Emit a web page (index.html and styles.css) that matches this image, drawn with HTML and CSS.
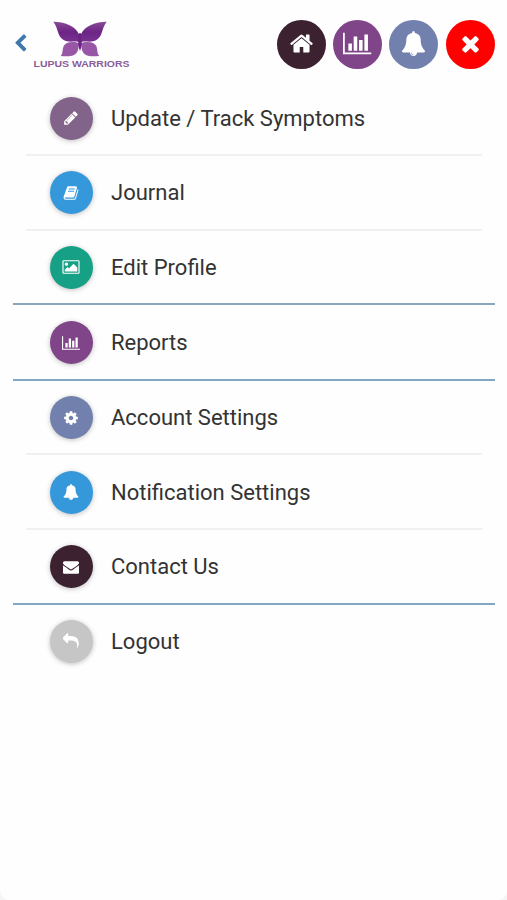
FILE: index.html
```html
<!DOCTYPE html>
<html lang="en">
<head>
    <meta charset="UTF-8">
    <meta name="viewport" content="width=device-width, initial-scale=1.0">
    <title>Lupus Warriors</title>
    <link rel="stylesheet" href="styles.css">
</head>
<body>
    <!-- Shared icons -->
    <svg class="icon-defs" width="0" height="0">
        <symbol id="icon-chart" viewBox="0 0 2048 1792"><path d="M640 896v512h-256v-512h256zm384-512v1024h-256v-1024h256zm1024 1152v128h-2048v-1536h128v1408h1920zm-640-896v768h-256v-768h256zm384-384v1152h-256v-1152h256z"/></symbol>
        <symbol id="icon-bell" viewBox="0 0 1792 1792"><path d="M912 1696q0-16-16-16-59 0-101.5-42.5t-42.5-101.5q0-16-16-16t-16 16q0 73 51.5 124.5t124.5 51.5q16 0 16-16zm816-288q0 52-38 90t-90 38h-448q0 106-75 181t-181 75-181-75-75-181h-448q-52 0-90-38t-38-90q50-42 91-88t85-119.5 74.5-158.5 50-206 19.5-260q0-152 117-282.5t307-158.5q-8-19-8-39 0-40 28-68t68-28 68 28 28 68q0 20-8 39 190 28 307 158.5t117 282.5q0 139 19.5 260t50 206 74.5 158.5 85 119.5 91 88z"/></symbol>
    </svg>

    <div class="page">
        <header class="header">
            <a class="back" href="#" aria-label="Back">
                <svg viewBox="0 0 1792 1792"><path d="M1427 301l-531 531 531 531q19 19 19 45t-19 45l-166 166q-19 19-45 19t-45-19l-742-742q-19-19-19-45t19-45l742-742q19-19 45-19t45 19l166 166q19 19 19 45t-19 45z"/></svg>
            </a>
            <svg class="logo" viewBox="0 0 100 52">
                <defs>
                    <linearGradient id="wing" x1="0" y1="0" x2="0" y2="1">
                        <stop offset="0" stop-color="#8a4a96"/>
                        <stop offset="0.5" stop-color="#6d2585"/>
                        <stop offset="1" stop-color="#7b3392"/>
                    </linearGradient>
                    <g id="half">
                        <path fill="url(#wing)" d="M20.3 2.7C31 3 43 6.500 46.200 16L46.500 23.200C41 21.600 35 24 30.500 21C24 17 25.500 9 20.300 2.700z"/>
                        <path fill="#9857a6" d="M46.200 24.200C41 22.300 33.500 22.500 31 26.500C29 30 30.500 33.500 27.800 37C33 37.500 40 38 43.500 34C45.500 31.500 45.500 28 46.200 24.200z"/>
                    </g>
                </defs>
                <use href="#half"/>
                <use href="#half" transform="translate(94 0) scale(-1 1)"/>
                <path fill="#6d2585" d="M47 14c2 0 2.200 3 1.700 5.500.4 4-.3 9-1.700 12.500-1.400-3.500-2.100-8.500-1.700-12.500-.5-2.500-.3-5.500 1.700-5.500z"/>
                <text class="logo-text" x="0.500" y="48" textLength="96" lengthAdjust="spacingAndGlyphs">LUPUS WARRIORS</text>
            </svg>
            <nav class="shortcuts">
                <a class="circle dark" href="#" aria-label="Home">
                    <svg viewBox="0 0 1792 1792"><path d="M1472 992v480q0 26-19 45t-45 19h-384v-384h-256v384h-384q-26 0-45-19t-19-45v-480q0-1 .5-3t.5-3l575-474 575 474q1 2 1 6zm223-69l-62 74q-8 9-21 11h-3q-13 0-21-7l-692-577-692 577q-12 8-24 7-13-2-21-11l-62-74q-8-10-7-23.5t11-21.5l719-599q32-26 76-26t76 26l244 204v-195q0-14 9-23t23-9h192q14 0 23 9t9 23v408l219 182q10 8 11 21.5t-7 23.5z"/></svg>
                </a>
                <a class="circle purple" href="#" aria-label="Reports">
                    <svg class="wide"><use href="#icon-chart"/></svg>
                </a>
                <a class="circle slate" href="#" aria-label="Notifications">
                    <svg><use href="#icon-bell"/></svg>
                </a>
                <a class="circle red" href="#" aria-label="Close">
                    <svg viewBox="0 0 1792 1792"><path d="M1490 1322q0 40-28 68l-136 136q-28 28-68 28t-68-28l-294-294-294 294q-28 28-68 28t-68-28l-136-136q-28-28-28-68t28-68l294-294-294-294q-28-28-28-68t28-68l136-136q28-28 68-28t68 28l294 294 294-294q28-28 68-28t68 28l136 136q28 28 28 68t-28 68l-294 294 294 294q28 28 28 68z"/></svg>
                </a>
            </nav>
        </header>

        <div class="menu">
            <div class="group">
                <a class="item" href="#">
                    <span class="circle mauve"><svg viewBox="0 0 1792 1792"><path d="M491 1536l91-91-235-235-91 91v107h128v128h107zm523-928q0-22-22-22-10 0-17 7l-542 542q-7 7-7 17 0 22 22 22 10 0 17-7l542-542q7-7 7-17zm-54-192l416 416-832 832h-416v-416zm683 96q0 53-37 90l-166 166-416-416 166-165q36-38 90-38 53 0 91 38l235 234q37 39 37 91z"/></svg></span>
                    <span>Update / Track Symptoms</span>
                </a>
                <a class="item" href="#">
                    <span class="circle blue"><svg viewBox="0 0 1792 1792"><path d="M1703 478q40 57 18 129l-275 906q-19 64-76.5 107.5t-122.5 43.5h-923q-77 0-148.5-53.5t-99.5-131.5q-24-67-2-127 0-4 3-27t4-37q1-8-3-21.5t-3-19.5q2-11 8-21t16.5-23.5 16.5-23.5q23-38 45-91.5t30-91.5q3-10 .5-30t-.5-28q3-11 17-28t17-23q21-36 42-92t25-90q1-9-2.5-32t.5-28q4-13 22-30.5t22-22.5q19-26 42.5-84.5t27.5-96.5q1-8-3-25.5t-2-26.5q2-8 9-18t18-23 17-21q8-12 16.5-30.5t15-35 16-36 19.5-32 26.5-23.5 36-11.5 47.5 5.5l-1 3q38-9 51-9h761q74 0 114 56t18 130l-274 906q-36 119-71.5 153.5t-128.5 34.5h-869q-27 0-38 15-11 16-1 43 24 70 144 70h923q29 0 56-15.5t35-41.5l300-987q7-22 5-57 38 15 59 43zm-1064 2q-4 13 2 22.5t20 9.5h608q13 0 25.5-9.5t16.5-22.5l21-64q4-13-2-22.5t-20-9.5h-608q-13 0-25.5 9.5t-16.5 22.5zm-83 256q-4 13 2 22.5t20 9.5h608q13 0 25.5-9.5t16.5-22.5l21-64q4-13-2-22.5t-20-9.5h-608q-13 0-25.5 9.5t-16.5 22.5z"/></svg></span>
                    <span>Journal</span>
                </a>
                <a class="item" href="#">
                    <span class="circle green"><svg class="wide" viewBox="-64 0 1920 1792"><path d="M576 576q0 80-56 136t-136 56-136-56-56-136 56-136 136-56 136 56 56 136zm1024 384v448h-1408v-192l320-320 160 160 512-512zm96-704h-1600q-13 0-22.5 9.5t-9.5 22.5v1216q0 13 9.5 22.5t22.5 9.5h1600q13 0 22.5-9.5t9.5-22.5v-1216q0-13-9.5-22.5t-22.5-9.5zm160 32v1216q0 66-47 113t-113 47h-1600q-66 0-113-47t-47-113v-1216q0-66 47-113t113-47h1600q66 0 113 47t47 113z"/></svg></span>
                    <span>Edit Profile</span>
                </a>
            </div>
            <div class="group single">
                <a class="item" href="#">
                    <span class="circle purple"><svg class="wide"><use href="#icon-chart"/></svg></span>
                    <span>Reports</span>
                </a>
            </div>
            <div class="group">
                <a class="item" href="#">
                    <span class="circle slate"><svg viewBox="0 0 1792 1792"><path d="M1152 896q0-106-75-181t-181-75-181 75-75 181 75 181 181 75 181-75 75-181zm512-109v222q0 12-8 23t-20 13l-185 28q-19 54-39 91 35 50 107 138 10 12 10 25t-9 23q-27 37-99 108t-94 71q-12 0-26-9l-138-108q-44 23-91 38-16 136-29 186-7 28-36 28h-222q-14 0-24.5-8.5t-11.5-21.5l-28-184q-49-16-90-37l-141 107q-10 9-25 9-14 0-25-11-126-114-165-168-7-10-7-23 0-12 8-23 15-21 51-66.5t54-70.5q-27-50-41-99l-183-27q-13-2-21-12.5t-8-23.5v-222q0-12 8-23t19-13l186-28q14-46 39-92-40-57-107-138-10-12-10-24 0-10 9-23 26-36 98.5-107.5t94.5-71.5q13 0 26 10l138 107q44-23 91-38 16-136 29-186 7-28 36-28h222q14 0 24.5 8.5t11.5 21.5l28 184q49 16 90 37l142-107q9-9 24-9 13 0 25 10 129 119 165 170 7 8 7 22 0 12-8 23-15 21-51 66.5t-54 70.5q26 50 41 98l183 28q13 2 21 12.5t8 23.5z"/></svg></span>
                    <span>Account Settings</span>
                </a>
                <a class="item" href="#">
                    <span class="circle blue"><svg><use href="#icon-bell"/></svg></span>
                    <span>Notification Settings</span>
                </a>
                <a class="item" href="#">
                    <span class="circle dark"><svg viewBox="0 0 1792 1792"><path d="M1792 710v794q0 66-47 113t-113 47h-1472q-66 0-113-47t-47-113v-794q44 49 101 87 362 246 497 345 57 42 92.5 65.5t94.5 48 110 24.5h2q51 0 110-24.5t94.5-48 92.5-65.5q170-123 498-345 57-39 100-87zm0-294q0 79-49 151t-122 123q-376 261-468 325-10 7-42.5 31t-54 38.5-52 32.5-57.5 27-50 9h-2q-23 0-50-9t-57.5-27-52-32.5-54-38.5-42.5-31q-91-64-262-182.5t-205-142.5q-62-42-117-115.5t-55-136.5q0-78 41.5-130t118.5-52h1472q65 0 112.5 47t47.5 113z"/></svg></span>
                    <span>Contact Us</span>
                </a>
            </div>
            <div class="group">
                <a class="item" href="#">
                    <span class="circle grey"><svg viewBox="0 0 1792 1792"><path d="M1792 1120q0 166-127 451-3 7-10.5 24t-13.5 30-13 22q-12 17-28 17-15 0-23.5-10t-8.5-25q0-9 2.5-26.5t2.5-23.5q5-68 5-123 0-112-19.5-200.5t-54-153.5-89-112-114.5-79-144-45-164.5-24-190.5-7h-224v256q0 26-19 45t-45 19-45-19l-512-512q-19-19-19-45t19-45l512-512q19-19 45-19t45 19 19 45v256h224q713 0 875 403 53 134 53 333z"/></svg></span>
                    <span>Logout</span>
                </a>
            </div>
        </div>
    </div>
</body>
</html>
```
FILE: styles.css
```css
* {
    box-sizing: border-box;
}

body {
    margin: 0;
    background: #f5f5f5;
    font-family: Roboto, sans-serif;
    color: #333;
}

a {
    color: inherit;
    text-decoration: none;
}

.icon-defs {
    display: block;
}

.page {
    height: 100vh;
    background: #fefefe;
    border-radius: 0 0 9px 9px;
    overflow: hidden;
}

/* Header */
.header {
    display: flex;
    align-items: center;
    height: 81.5px;
    padding: 8px 12.5px 0 11px;
}

.back {
    display: flex;
    margin-top: -2px;
    color: #3e78ad;
}

.back svg {
    width: 19px;
    height: 19px;
    fill: currentColor;
}

.logo {
    width: 100px;
    height: 52px;
    margin-left: 3px;
}

.logo-text {
    font-family: "Liberation Sans", Arial, sans-serif;
    font-size: 9.5px;
    font-weight: bold;
    fill: #8b5c9a;
}

.shortcuts {
    display: flex;
    gap: 7.5px;
    margin-left: auto;
}

/* Round icon buttons */
.circle {
    display: flex;
    flex: none;
    align-items: center;
    justify-content: center;
    width: 43px;
    height: 43px;
    border-radius: 50%;
    color: #fff;
}

.circle svg {
    width: 16px;
    height: 16px;
    fill: currentColor;
}

.circle svg.wide {
    width: 18px;
}

.shortcuts .circle {
    width: 48.8px;
    height: 48.8px;
    padding-bottom: 2px;
}

.shortcuts svg {
    width: 25px;
    height: 25px;
}

.shortcuts svg.wide {
    width: 28.5px;
}

.dark {
    background: #3c2130;
}

.purple {
    background: #804488;
}

.slate {
    background: #7180ad;
}

.red {
    background: #fe0000;
}

.mauve {
    background: #826389;
}

.blue {
    background: #3498db;
}

.green {
    background: #16a085;
}

.grey {
    background: #c6c6c6;
}

/* Menu */
.menu {
    padding: 0 12.5px 0 13px;
}

.group {
    padding: 0 13px;
    border-bottom: 2px solid #86a7c2;
}

.group:last-child {
    border-bottom: none;
}

.item {
    display: flex;
    align-items: center;
    gap: 18px;
    height: 74.6px;
    padding: 1px 0 0 24px;
    border-bottom: 2px solid #f0f0f0;
    font-size: 22px;
}

.item:last-child {
    height: 72.6px;
    border-bottom: none;
}

.group.single .item {
    height: 73.6px;
}

.item .circle {
    padding-right: 1px;
    box-shadow: 0 1px 5px rgba(0, 0, 0, 0.25);
}
```
